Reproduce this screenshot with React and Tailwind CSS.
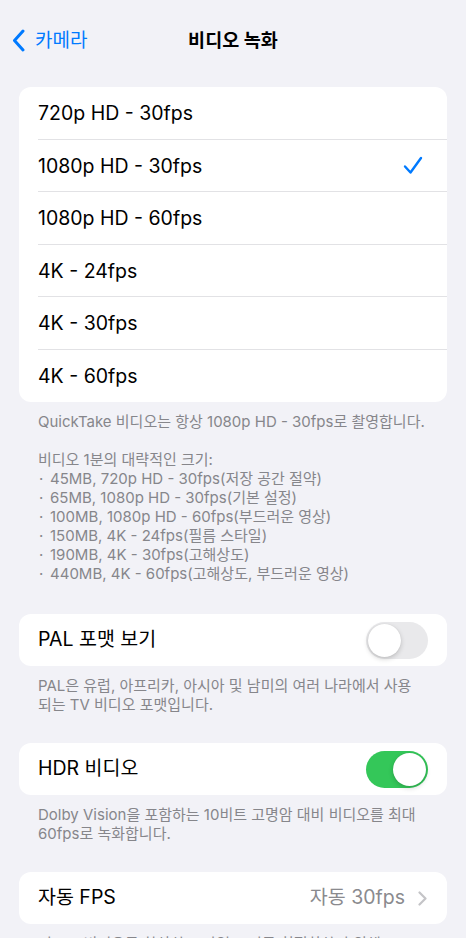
import React from "react";

const FONT = { fontFamily: 'Inter, "Noto Sans CJK KR", sans-serif' };

function Check() {
  return (
    <svg width="20" height="19" viewBox="0 0 20 19" fill="none">
      <path d="M2 10.5 L7.5 16.5 L18 2" stroke="#007aff" strokeWidth="2.4" strokeLinecap="round" strokeLinejoin="round" />
    </svg>
  );
}

function Toggle({ on }) {
  return (
    <div
      className={
        "w-[62px] h-[37px] rounded-full p-[2px] flex items-center " +
        (on ? "bg-[#34c759] justify-end" : "bg-[#e9e9eb] justify-start")
      }
    >
      <div className="w-[33px] h-[33px] rounded-full bg-white shadow-[0_2px_5px_rgba(0,0,0,0.18),0_0_1px_rgba(0,0,0,0.12)]" />
    </div>
  );
}

const resolutions = [
  "720p HD - 30fps",
  "1080p HD - 30fps",
  "1080p HD - 60fps",
  "4K - 24fps",
  "4K - 30fps",
  "4K - 60fps",
];

const sizes = [
  "45MB, 720p HD - 30fps(저장 공간 절약)",
  "65MB, 1080p HD - 30fps(기본 설정)",
  "100MB, 1080p HD - 60fps(부드러운 영상)",
  "150MB, 4K - 24fps(필름 스타일)",
  "190MB, 4K - 30fps(고해상도)",
  "440MB, 4K - 60fps(고해상도, 부드러운 영상)",
];

export default function App() {
  return (
    <div className="w-[466px] h-[938px] overflow-hidden bg-[#f2f2f7] text-black" style={FONT}>
      {/* Nav */}
      <div className="h-[80px] grid grid-cols-[1fr_auto_1fr] items-center">
        <div className="flex items-center pl-[12px] gap-[10px] text-[#007aff]">
          <svg width="13" height="23" viewBox="0 0 13 23" fill="none">
            <path d="M11 2 L2.5 11.5 L11 21" stroke="#007aff" strokeWidth="3" strokeLinecap="round" strokeLinejoin="round" />
          </svg>
          <span className="text-[19px] leading-none">카메라</span>
        </div>
        <div className="text-[18.5px] font-semibold leading-none">비디오 녹화</div>
        <div />
      </div>

      {/* Resolution group */}
      <div className="mt-[7px] mx-[19px] rounded-[12px] bg-white overflow-hidden">
        {resolutions.map((r, i) => (
          <div key={r} className="pl-[19px]">
            <div
              className={
                "h-[52.5px] flex items-center justify-between pr-[24px] " +
                (i < resolutions.length - 1 ? "border-b border-[#e2e2e5]" : "")
              }
            >
              <span className="text-[19.5px] leading-none pt-[2px]">{r}</span>
              {i === 1 && <Check />}
            </div>
          </div>
        ))}
      </div>

      <div className="px-[38px] pt-[10px] text-[15px] leading-[19px] text-[#86868b]">
        <div>QuickTake 비디오는 항상 1080p HD - 30fps로 촬영합니다.</div>
        <div className="h-[19px]" />
        <div>비디오 1분의 대략적인 크기:</div>
        {sizes.map((s) => (
          <div key={s} className="flex">
            <span className="w-[12px] pl-[1px]">·</span>
            <span>{s}</span>
          </div>
        ))}
      </div>

      {/* PAL */}
      <div className="mt-[31px] mx-[19px] rounded-[12px] bg-white h-[52px] flex items-center justify-between pl-[19px] pr-[19px]">
        <span className="text-[19.5px] leading-none">PAL 포맷 보기</span>
        <Toggle on={false} />
      </div>
      <div className="px-[38px] pt-[10px] text-[15px] leading-[19px] text-[#86868b]">
        <div>PAL은 유럽, 아프리카, 아시아 및 남미의 여러 나라에서 사용</div>
        <div>되는 TV 비디오 포맷입니다.</div>
      </div>

      {/* HDR */}
      <div className="mt-[29px] mx-[19px] rounded-[12px] bg-white h-[52px] flex items-center justify-between pl-[19px] pr-[19px]">
        <span className="text-[19.5px] leading-none">HDR 비디오</span>
        <Toggle on={true} />
      </div>
      <div className="px-[38px] pt-[10px] text-[15px] leading-[19px] text-[#86868b]">
        <div>Dolby Vision을 포함하는 10비트 고명암 대비 비디오를 최대</div>
        <div>60fps로 녹화합니다.</div>
      </div>

      {/* Auto FPS */}
      <div className="mt-[29px] mx-[19px] rounded-[12px] bg-white h-[52px] flex items-center justify-between pl-[19px] pr-[20px]">
        <span className="text-[19.5px] leading-none">자동 FPS</span>
        <div className="flex items-center gap-[13px]">
          <span className="text-[19.5px] leading-none text-[#8a8a8e]">자동 30fps</span>
          <svg width="9" height="15" viewBox="0 0 9 15" fill="none">
            <path d="M1.5 1.5 L7.5 7.5 L1.5 13.5" stroke="#c4c4c7" strokeWidth="2.2" strokeLinecap="round" strokeLinejoin="round" />
          </svg>
        </div>
      </div>
      <div className="px-[38px] pt-[10px] text-[15px] leading-[19px] text-[#86868b]">
        <div>저조도 비디오를 향상하고 파일 크기를 최적화하기 위해</div>
      </div>
    </div>
  );
}
